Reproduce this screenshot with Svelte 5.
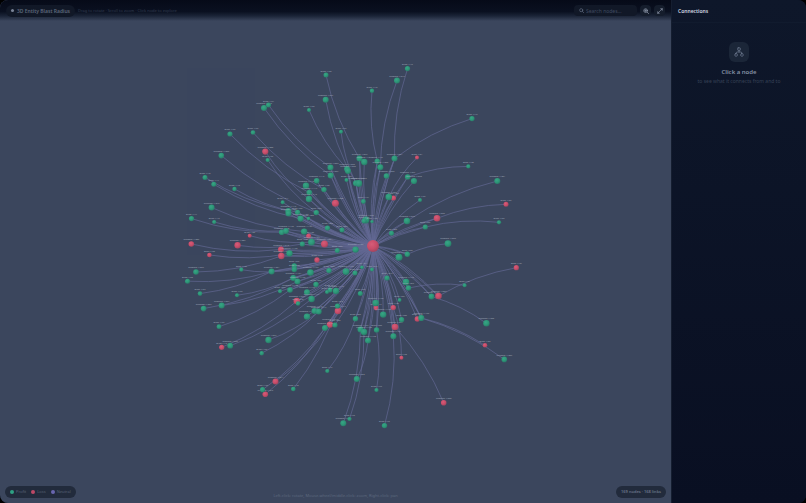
<script lang="ts">
	type Kind = 'profit' | 'loss';
	type Place = { x: number; y: number };
	type Point = Place & { r: number; kind: Kind; parent?: Place };

	const hub = { x: 373, y: 246, r: 6 };

	// x, y, radius and, where it is known, the x, y of the parent
	const profit = [
		[326, 75, 2.5, 359.5, 158.5], [325.7, 99.7, 3, 356, 183.3], [309, 110, 2, 347, 169],
		[264, 108, 3, 330.7, 175.6], [268.5, 105, 2.5, 330.5, 167.6], [230, 134, 2.6, 309, 192.5],
		[253, 132.5, 2.3, 324, 189.6], [341, 131.7, 2, 356, 183.3], [267.7, 160, 2.1, 316.3, 212.6],
		[221.3, 155.6, 2.8, 316.3, 212.6], [205, 177.4, 2.5, 288.3, 211], [213.8, 184.3, 2.5, 300.6, 218.6],
		[234.5, 189, 2.2, 297.6, 212.3], [211.6, 207.6, 3, 304.2, 231.6], [191.5, 218.6, 2.6, 281.7, 232.3],
		[214.2, 222, 2.1, 286, 231], [407.5, 68.6, 2.6, 394.5, 158.6], [397, 80.6, 3, 380.3, 167.3],
		[372, 90.8, 2.2, 377.3, 161.3], [472, 118.6, 2.6, 394.5, 158.6], [468.3, 166.4, 2.1, 407.7, 177],
		[497.3, 181, 3, 407, 221], [499, 222.3, 2.1, 425.3, 227], [448, 243.6, 3.4, 407.3, 254.3],
		[464.6, 285.3, 2, 408.5, 288], [486.4, 323.3, 3.2, 431.5, 296.5], [504.3, 359.4, 2.8, 421.3, 318],
		[196, 272, 2.8, 281.3, 256], [187.5, 281.2, 2.5, 271.6, 271.5], [200, 293.6, 2.3, 271.6, 271.5],
		[241.3, 269.7, 2.1, 294.3, 269.5], [271.6, 271.5, 3], [237, 295.3, 2, 293.3, 278],
		[203.6, 308.6, 2.8, 293.3, 278], [221.7, 305.6, 3, 297.5, 281.5], [219, 326.7, 2.4, 290, 290],
		[230.2, 345.7, 2.9, 311.6, 299], [268.5, 340, 3.2, 318.7, 311.6], [261.7, 353.2, 2.2, 318.7, 311.6],
		[262.6, 389.7, 2.6, 325, 328], [293.3, 389, 2.3, 337.5, 306], [327.3, 371, 2.1, 355.5, 318.8],
		[356.8, 379, 3, 368, 340.6], [376.5, 390, 2.1, 376.6, 330], [343.3, 423.3, 3, 360.5, 329.5],
		[349.5, 419, 2.1, 364, 332], [384.5, 425.6, 2.7, 393.4, 336.3],
		[359.5, 158.5, 3], [364.3, 162, 3.2], [377.3, 161.3, 2.7], [380.3, 167.3, 3],
		[394.5, 158.6, 3], [386.5, 176, 2.8], [330.5, 167.6, 3], [330.7, 175.6, 3], [347, 169, 2.9],
		[348, 171, 3], [346.5, 180, 2], [356, 183.3, 3], [358.8, 183.5, 3.4], [324, 189.6, 2.7],
		[407.7, 177, 2.8], [414, 181, 3.1], [388.8, 197, 3.3], [363.4, 201.5, 2.4], [420, 200, 2],
		[366, 220, 3.4], [364, 221, 2.5], [372, 221.6, 1.7], [407, 221, 3.3], [391.5, 233.3, 2.5],
		[425.3, 227, 2.6], [327.5, 228, 2.6], [342, 230, 2.5], [337.3, 250.6, 2.5], [355.6, 249.6, 3.2],
		[399, 257.3, 3.5], [407.3, 254.3, 2.7], [329, 270.6, 2.7], [346, 271.6, 3.4], [355, 273, 2.5],
		[362, 267.3, 1.9], [372, 269.6, 2], [387, 278, 2.6], [282.7, 202.3, 2],
		[306, 185.7, 3.2], [316.7, 180.8, 2.8], [309.3, 192.5, 2.8], [309, 199, 3.2], [288.3, 211, 3],
		[288.5, 213.5, 3], [297.6, 212.3, 2.6], [300.6, 218.6, 3.1], [308.5, 218.6, 1.8], [316.3, 212.6, 2.7],
		[281.7, 232.3, 2.8], [286, 231, 2.9], [304.2, 231.6, 3.2], [302.3, 244, 2.6], [311.5, 242.2, 3.4],
		[289.5, 253.4, 3.2], [294.3, 266, 2.7], [294.3, 269.5, 2.7], [310.5, 272.6, 3.3], [293.3, 278, 3],
		[297.5, 281.5, 3], [316, 284.5, 2.7], [280, 291.3, 2], [290, 290, 2.8], [307, 292.3, 3],
		[298, 303.5, 2.2], [311.6, 299, 3.2], [307, 316.6, 3.2], [314.5, 311, 3], [318.7, 311.6, 3],
		[325, 328, 3], [336, 291, 3.2], [330, 290, 2.6], [327, 292, 2], [337.5, 306, 2.6], [335, 325, 2.6],
		[360.3, 293.4, 2.5], [375.7, 303, 3.3], [383.2, 314.6, 3.2], [399.6, 300, 1.9], [355.5, 318.8, 2.7],
		[401.6, 319.7, 2.7], [360.5, 329.5, 3], [364, 332, 3.2], [376.6, 330, 2.7], [368, 340.6, 3],
		[393.4, 336.3, 3], [406, 282, 3.3], [408.5, 288, 2.7], [431.5, 296.5, 2.9], [421.3, 318, 3.1]
	];

	const loss = [
		[265.3, 151.6, 3.1, 309, 199], [417, 157.6, 2, 388.8, 197], [335.4, 203.3, 3.5], [393.5, 198, 2.6],
		[324.5, 244, 3.5], [249.7, 235.7, 2, 311.5, 242.2], [191.3, 244, 2.8, 281, 249.5],
		[237.6, 245.3, 3.2, 302.3, 244], [209.4, 255, 2.3, 289.5, 253.4], [308.6, 236, 2.5],
		[281, 249.5, 3], [281.3, 256, 3.2], [317, 260, 2.7], [221.7, 347.3, 2.6, 296.8, 301],
		[275.5, 381.5, 3, 330, 324.6], [265.3, 394.3, 2.8, 325, 328], [296.8, 301, 3.3], [338, 311, 3.3],
		[330, 324.6, 3.2], [376, 308, 2.4], [393.3, 307.6, 2.7], [395, 327, 3.3],
		[401.4, 357.7, 2, 393.3, 307.6], [438.5, 296, 3.3], [417.3, 319, 2.7],
		[506, 204.3, 2.5, 437, 218.3], [437, 218.3, 3.3], [516.3, 267.7, 2.6, 438.5, 296],
		[485, 345.3, 2.3, 421.3, 318], [443.7, 402.8, 2.8, 395, 327]
	];

	const toPoints = (rows: number[][], kind: Kind): Point[] =>
		rows.map(([x, y, r, px, py]) => ({
			x,
			y,
			r,
			kind,
			parent: px ? { x: px, y: py } : undefined
		}));

	const nodes = [...toPoints(loss, 'loss'), ...toPoints(profit, 'profit')];

	const curve = (node: Point) => {
		const to = node.parent ?? hub;
		const cx = (node.x + to.x) / 2 - (to.y - node.y) * 0.09;
		const cy = (node.y + to.y) / 2 + (to.x - node.x) * 0.09;
		return `M${node.x} ${node.y}Q${cx} ${cy} ${to.x} ${to.y}`;
	};

	// outer nodes carry on to the hub in a second, gentler line
	const trunk = (node: Point) => {
		const from = node.parent ?? hub;
		const cx = (from.x + hub.x) / 2 - (hub.y - from.y) * 0.05;
		const cy = (from.y + hub.y) / 2 + (hub.x - from.x) * 0.05;
		return `M${from.x} ${from.y}Q${cx} ${cy} ${hub.x} ${hub.y}`;
	};

	const label = (node: Point, i: number) =>
		node.r > 2.7 ? `Customer #${1000 + i}` : `Order #${100 + i}`;

	let search = $state('');
</script>

<main class="app">
	<section class="stage">
		<svg class="graph" viewBox="0 0 671 503" role="img" aria-label="Entity graph">
			<defs>
				<radialGradient id="profit" cx="40%" cy="35%" r="65%">
					<stop offset="0" stop-color="#38a486" />
					<stop offset="0.6" stop-color="#2d9777" />
					<stop offset="1" stop-color="#2a7a69" />
				</radialGradient>
				<radialGradient id="loss" cx="40%" cy="35%" r="65%">
					<stop offset="0" stop-color="#d65c78" />
					<stop offset="0.6" stop-color="#c84c69" />
					<stop offset="1" stop-color="#a0465f" />
				</radialGradient>
			</defs>
			<g class="links">
				{#each nodes as node}
					<path d={curve(node)} />
					{#if node.parent}
						<path d={trunk(node)} />
					{/if}
				{/each}
			</g>
			<circle cx={hub.x} cy={hub.y} r={hub.r} fill="url(#loss)" />
			{#each nodes as node, i}
				<circle cx={node.x} cy={node.y} r={node.r} fill="url(#{node.kind})" />
				<text x={node.x} y={node.y - node.r - 1}>{label(node, i)}</text>
			{/each}
		</svg>

		<header class="toolbar">
			<h1 class="pill title"><span class="spark"></span>3D Entity Blast Radius</h1>
			<p class="hint">Drag to rotate · Scroll to zoom · Click node to explore</p>
			<label class="search">
				<svg viewBox="0 0 16 16" aria-hidden="true">
					<circle cx="7" cy="7" r="5" />
					<path d="M11 11l4 4" />
				</svg>
				<input type="text" placeholder="Search nodes..." aria-label="Search nodes" bind:value={search} />
			</label>
			<button class="tool" aria-label="Zoom to fit">
				<svg viewBox="0 0 16 16" aria-hidden="true">
					<circle cx="7" cy="7" r="5" />
					<path d="M11 11l4 4M7 4.5v5M4.5 7h5" />
				</svg>
			</button>
			<button class="tool" aria-label="Fullscreen">
				<svg viewBox="0 0 16 16" aria-hidden="true">
					<path d="M9 7l5-5M10 2h4v4M7 9l-5 5M2 10v4h4" />
				</svg>
			</button>
		</header>

		<footer class="status">
			<ul class="pill legend">
				<li><span class="dot profit"></span>Profit</li>
				<li><span class="dot loss"></span>Loss</li>
				<li><span class="dot neutral"></span>Neutral</li>
			</ul>
			<p class="controls">Left-click: rotate, Mouse-wheel/middle-click: zoom, Right-click: pan</p>
			<p class="pill count">169 nodes · 168 links</p>
		</footer>
	</section>

	<aside class="panel">
		<h2>Connections</h2>
		<div class="empty">
			<div class="badge">
				<svg viewBox="0 0 24 24" aria-hidden="true">
					<rect x="9" y="2" width="6" height="6" rx="1" />
					<rect x="2" y="16" width="6" height="6" rx="2" />
					<rect x="16" y="16" width="6" height="6" rx="2" />
					<path d="M12 8v4M5 16v-1c0-2 1-3 3-3h8c2 0 3 1 3 3v1" />
				</svg>
			</div>
			<h3>Click a node</h3>
			<p>to see what it connects from and to</p>
		</div>
	</aside>
</main>

<style>
	:global(body) {
		margin: 0;
		background: #000;
	}

	.app {
		display: flex;
		min-height: 100vh;
		overflow: hidden;
		border-radius: 8px;
		background: #0d1428;
		font-family: 'Noto Sans', sans-serif;
		font-size: 5px;
		line-height: 8px;
	}

	h1,
	h2,
	h3,
	p,
	ul {
		margin: 0;
		font-size: 5px;
	}

	svg {
		display: block;
		fill: none;
		stroke: currentColor;
		stroke-linecap: round;
		stroke-linejoin: round;
	}

	.stage {
		position: relative;
		display: flex;
		flex: 1;
		flex-direction: column;
		justify-content: space-between;
		min-width: 0;
		background: #3b465d;
	}

	.graph {
		position: absolute;
		inset: 0;
		width: 100%;
		height: 100%;
		stroke: none;
	}

	.links {
		stroke: #8284c0;
		stroke-width: 0.7;
		opacity: 0.55;
	}

	.graph text {
		fill: #a3adbd;
		font-size: 2px;
		text-anchor: middle;
	}

	.toolbar {
		position: relative;
		display: flex;
		align-items: center;
		gap: 3px;
		box-sizing: border-box;
		height: 21px;
		padding: 0 6px;
		background: linear-gradient(#060a18 0, #0a1020 55%, #1a2336 75%, #3b465d 100%);
	}

	.pill {
		display: flex;
		align-items: center;
		box-sizing: border-box;
		height: 12px;
		border-radius: 6px;
		background: #222b3c;
		color: #586377;
	}

	.title {
		gap: 3px;
		padding: 0 5px;
		background: #111827;
		color: #5e687c;
		font-weight: 600;
	}

	.spark {
		width: 3px;
		height: 3px;
		border-radius: 50%;
		background: #7b8498;
	}

	.hint {
		flex: 1;
		color: #343e52;
		font-size: 4px;
	}

	.search {
		display: flex;
		align-items: center;
		gap: 2px;
		box-sizing: border-box;
		width: 63px;
		height: 11px;
		padding: 0 5px;
		border-radius: 4px;
		background: #111827;
		color: #677286;
	}

	.search svg {
		flex: none;
		width: 5px;
		height: 5px;
		stroke-width: 2;
	}

	.search input {
		width: 100%;
		min-width: 0;
		padding: 0;
		border: 0;
		outline: 0;
		background: none;
		color: #8590a5;
		font: inherit;
	}

	.search input::placeholder {
		color: #404b60;
		opacity: 1;
	}

	.tool {
		display: grid;
		place-items: center;
		width: 11px;
		height: 11px;
		padding: 0;
		border: 0;
		border-radius: 4px;
		background: #151d2c;
		color: #8993a6;
	}

	.tool svg {
		width: 6px;
		height: 6px;
		stroke-width: 2;
	}

	.status {
		position: relative;
		display: grid;
		grid-template-columns: 1fr auto 1fr;
		align-items: center;
		padding: 5px;
	}

	.legend {
		gap: 5px;
		justify-self: start;
		padding: 0 5px;
		font-size: 4px;
		list-style: none;
	}

	.legend li {
		display: flex;
		align-items: center;
		gap: 2px;
	}

	.dot {
		width: 4px;
		height: 4px;
		border-radius: 50%;
	}

	.dot.profit {
		background: #2fa184;
	}

	.dot.loss {
		background: #bd4966;
	}

	.dot.neutral {
		background: #6966af;
	}

	.controls {
		align-self: end;
		color: #5d697e;
		font-size: 4px;
		line-height: 4px;
	}

	.count {
		justify-self: end;
		padding: 0 5px;
		color: #6b768a;
		font-size: 4px;
		font-weight: 600;
	}

	.panel {
		display: flex;
		flex: 0 0 135px;
		flex-direction: column;
		box-sizing: border-box;
		border-left: 1px solid #151e30;
		background: linear-gradient(#0e172a, #090f22);
	}

	.panel h2 {
		padding: 7px 6px;
		border-bottom: 1px solid #111b2e;
		color: #d3d9e3;
		font-weight: 600;
	}

	.empty {
		display: flex;
		flex-direction: column;
		align-items: center;
		padding-top: 19px;
	}

	.badge {
		display: grid;
		place-items: center;
		width: 20px;
		height: 20px;
		margin-bottom: 6px;
		border-radius: 6px;
		background: #1b2638;
		color: #69758a;
	}

	.badge svg {
		width: 10px;
		height: 10px;
		stroke-width: 2;
	}

	.empty h3 {
		color: #8591a5;
		font-size: 6px;
		font-weight: 600;
	}

	.empty p {
		margin-top: 1px;
		color: #364156;
	}
</style>
